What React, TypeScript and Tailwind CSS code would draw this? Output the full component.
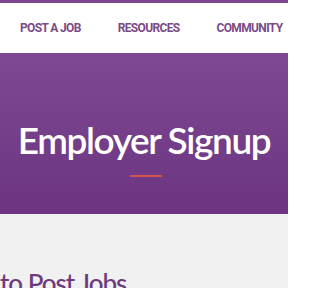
export default function App() {
  return (
    <div className="h-[288px] w-[288px] overflow-hidden bg-[#f1f1f1]">
      <div className="h-[3px] bg-[#7d4890]" />
      <nav className="flex h-[50px] items-center gap-[37px] whitespace-nowrap bg-white pl-[20px] font-['Roboto',sans-serif] text-[12px] font-bold tracking-[-0.65px] text-[#7a4a88]">
        <span>POST A JOB</span>
        <span>RESOURCES</span>
        <span>COMMUNITY</span>
      </nav>
      <section className="flex h-[161px] flex-col items-center bg-gradient-to-b from-[#7e4992] to-[#6c3481] pt-[64px]">
        <h1 className="whitespace-nowrap font-['Lato',sans-serif] text-[37px] font-semibold leading-[46px] tracking-[-1.4px] text-white">
          Employer Signup
        </h1>
        <div className="ml-[4px] mt-[12px] h-[2px] w-[32px] bg-[#d0574f]" />
      </section>
      <div className="whitespace-nowrap pt-[54px] font-['Lato',sans-serif] text-[26px] font-medium leading-[30px] tracking-[-1px] text-[#6d3a7e]">
        to Post Jobs
      </div>
    </div>
  );
}
